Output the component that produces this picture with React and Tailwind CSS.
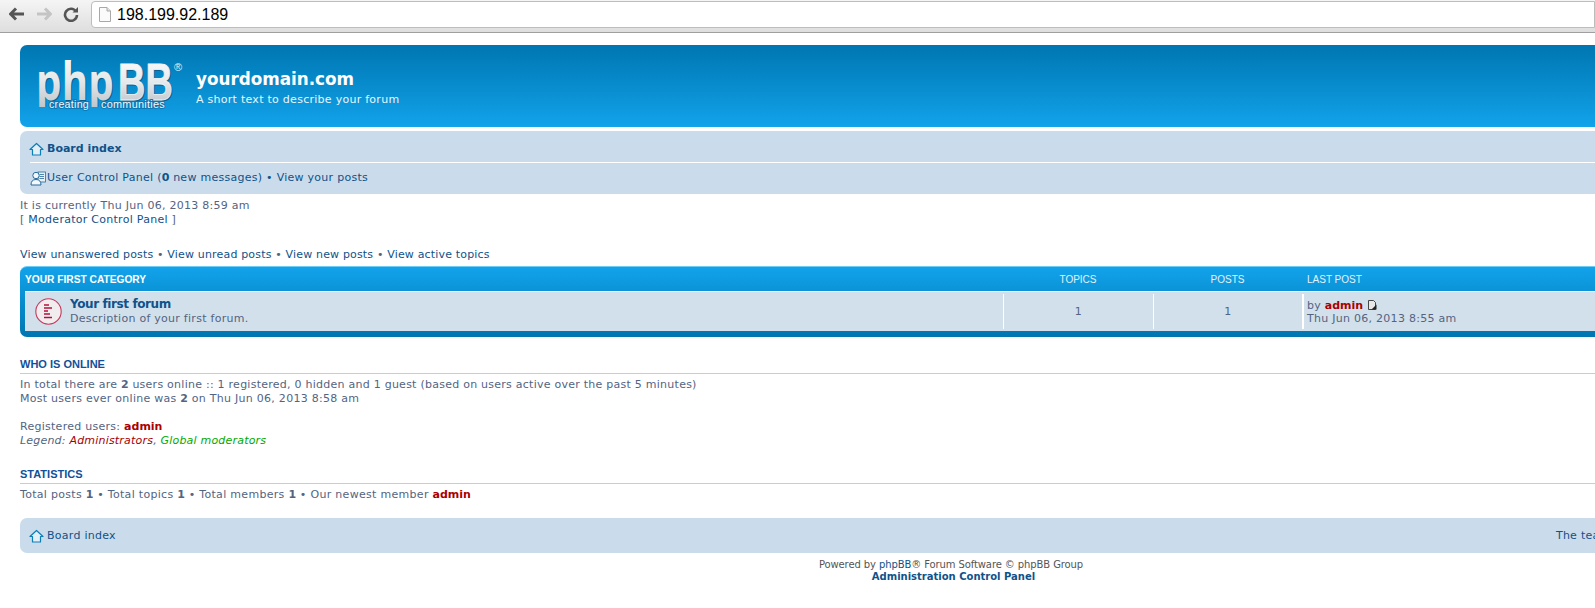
import React from "react";

const dejavu = "font-['DejaVu_Sans',Verdana,sans-serif]";

function HomeIcon() {
  return (
    <svg width="15" height="15" viewBox="0 0 15 15" className="shrink-0 -ml-[1px] mr-[1px]">
      <path d="M7.5 1.5 L14 7.5 L11.5 7.5 L11.5 13 L3.5 13 L3.5 7.5 L1 7.5 Z" fill="#e4eef5" stroke="#0a7fb8" strokeWidth="1.2" strokeLinejoin="round" />
    </svg>
  );
}

function UserIcon() {
  return (
    <svg width="16" height="16" viewBox="0 0 16 16" className="shrink-0">
      <rect x="8" y="2" width="7.5" height="10" fill="#e8f0f6" stroke="#256b9c" strokeWidth="0.8" />
      <path d="M9.5 4.5h4.5M9.5 6.5h4.5M9.5 8.5h4.5" stroke="#256b9c" strokeWidth="0.8" />
      <circle cx="6" cy="5.5" r="3.2" fill="#f4f8fb" stroke="#256b9c" strokeWidth="1" />
      <path d="M1 15c0-3.5 1.5-5.5 5-5.5s5 2 5 5.5z" fill="#f4f8fb" stroke="#256b9c" strokeWidth="1" />
    </svg>
  );
}

function ForumIcon() {
  return (
    <svg width="27" height="27" viewBox="0 0 27 27" className="shrink-0">
      <circle cx="13.5" cy="13.5" r="12.7" fill="#f1edee" stroke="#c8385c" strokeWidth="1.1" />
      <path d="M9 7h5M9 10h8M9 13h4M9 16h6M9 19.5h8" stroke="#b5103c" strokeWidth="1.4" />
    </svg>
  );
}

function LatestIcon() {
  return (
    <svg width="9" height="10" viewBox="0 0 9 10" className="inline-block align-[-1px] ml-[5px]">
      <path d="M0.5 0.5h5l2 2v7h-7z" fill="#e8e8e8" stroke="#333" strokeWidth="0.9" />
      <path d="M3.5 9.5l5-5v5z" fill="#222" />
    </svg>
  );
}

function PhpbbLogo() {
  const php = { fontFamily: "'Open Sans',sans-serif", fontSize: 52, fontWeight: 700, textLength: 78, lengthAdjust: "spacingAndGlyphs" };
  const bb = { fontFamily: "'Liberation Sans',sans-serif", fontSize: 52, fontWeight: 700, textLength: 55, lengthAdjust: "spacingAndGlyphs" };
  const small = { fontFamily: "'Liberation Sans',sans-serif", fontSize: 10.5, fill: "#f3f7fa", stroke: "#0b78b4", strokeWidth: 2, paintOrder: "stroke", lengthAdjust: "spacingAndGlyphs" };
  return (
    <svg width="150" height="60" viewBox="0 0 150 60" className="shrink-0">
      <defs>
        <linearGradient id="logoFill" x1="0" y1="0" x2="0" y2="1">
          <stop offset="0" stopColor="#ffffff" />
          <stop offset="0.5" stopColor="#e6e9eb" />
          <stop offset="1" stopColor="#b4bcc3" />
        </linearGradient>
        <clipPath id="logoClip">
          <rect x="0" y="0" width="150" height="47" />
        </clipPath>
      </defs>
      <g clipPath="url(#logoClip)">
        <text x="2" y="41" {...php} fill="#05608f">php</text>
        <text x="1" y="40" {...php} fill="url(#logoFill)">php</text>
      </g>
      <text x="84" y="41" {...bb} fill="#05608f" stroke="#05608f" strokeWidth="0.8">BB</text>
      <text x="83" y="40" {...bb} fill="url(#logoFill)" stroke="#f2f4f5" strokeWidth="0.8">BB</text>
      <text x="139" y="11" fontFamily="'Liberation Sans',sans-serif" fontSize="11" fill="#e6eef3">®</text>
      <text x="14" y="48" {...small} textLength="40">creating</text>
      <text x="66" y="48" {...small} textLength="64">communities</text>
    </svg>
  );
}

function BrowserBar() {
  return (
    <div className="h-[33px] flex items-start bg-gradient-to-b from-[#f5f5f5] to-[#dedede] border-b border-[#9f9f9f]">
      <div className="w-[91px] h-[28px] flex items-center pl-[9px] gap-[11px] shrink-0">
        <svg width="16" height="14" viewBox="0 0 16 14">
          <path d="M7 1.5 L1.5 7 L7 12.5 M2 7 H15" fill="none" stroke="#555" strokeWidth="3" />
        </svg>
        <svg width="16" height="14" viewBox="0 0 16 14">
          <path d="M9 1.5 L14.5 7 L9 12.5 M14 7 H1" fill="none" stroke="#c4c4c4" strokeWidth="3" />
        </svg>
        <svg width="16" height="16" viewBox="0 0 16 16">
          <path d="M13 5.5 A6 6 0 1 0 14 9" fill="none" stroke="#555" strokeWidth="2.6" />
          <path d="M9.5 6.5 H15 V1 Z" fill="#555" />
        </svg>
      </div>
      <div className="flex-1 h-[27px] mt-px bg-white border border-[#bdbdbd] rounded-l-[4px] flex items-center pl-[7px] gap-[6px] font-['Liberation_Sans',sans-serif] text-[16px] tracking-normal text-black">
        <svg width="12" height="15" viewBox="0 0 12 15" className="shrink-0">
          <path d="M0.5 0.5h7.5l3.5 3.5v10.5h-11z" fill="#fbfbfb" stroke="#a8a8a8" />
          <path d="M8 0.5v3.5h3.5" fill="#e4e4e4" stroke="#a8a8a8" />
        </svg>
        198.199.92.189
      </div>
    </div>
  );
}

function Sep() {
  return <span> • </span>;
}

function A({ children, className = "" }) {
  return <a className={`text-[#105289] ${className}`}>{children}</a>;
}

function Admin() {
  return <b className="text-[#aa0000]">admin</b>;
}

function SectionTitle({ children }) {
  return (
    <h3 className="font-['Liberation_Sans',sans-serif] font-bold text-[11px] leading-[14px] tracking-normal uppercase text-[#115098] border-b border-[#cccccc] pb-[2px] h-[17px]">
      {children}
    </h3>
  );
}

export default function App() {
  return (
    <div className={`w-[1595px] h-[608px] overflow-hidden bg-white ${dejavu} text-[11px] leading-[14px] tracking-[0.27px] [&_b]:tracking-normal text-[#536482]`}>
      <BrowserBar />
      <div className="w-[1862px] ml-[20px] pt-[12px]">
        <div className="h-[82px] rounded-[7px] bg-gradient-to-b from-[#0076b1] to-[#12a3eb] flex items-start pl-[15px] pt-[15px] text-white">
          <PhpbbLogo />
          <div className="ml-[11px] pt-[8px]">
            <div className="text-[16.8px] leading-[22px] font-bold tracking-normal">yourdomain.com</div>
            <div className="text-[11px] leading-[13px] mt-[3px] text-[#eaf5fb]">A short text to describe your forum</div>
          </div>
        </div>

        <div className="mt-[4px] h-[63px] rounded-[7px] bg-[#cadceb] px-[10px] text-[#105289]">
          <div className="h-[32px] flex items-center gap-[2px] border-b border-white pt-[5px] font-bold tracking-normal">
            <HomeIcon />
            <span>Board index</span>
          </div>
          <div className="h-[30px] flex items-center">
            <UserIcon />
            <span className="ml-px">
              User Control Panel (<b>0</b> new messages) <span>•</span> View your posts
            </span>
          </div>
        </div>

        <p className="mt-[5px]">It is currently Thu Jun 06, 2013 8:59 am</p>
        <p>
          [ <A>Moderator Control Panel</A> ]
        </p>

        <p className="mt-[21px] tracking-[0.17px]">
          <A>View unanswered posts</A>
          <Sep />
          <A>View unread posts</A>
          <Sep />
          <A>View new posts</A>
          <Sep />
          <A>View active topics</A>
        </p>

        <div className="mt-[4px] h-[71px] rounded-[7px] bg-gradient-to-b from-[#12a3eb] to-[#0076b1] border-t border-[#6fcdf5] px-[5px] pb-[6px]">
          <div className="h-[24px] pt-[2px] flex items-center font-['Liberation_Sans',sans-serif] uppercase text-[10px] tracking-normal">
            <div className="w-[978px] font-bold text-[10.2px] text-white">Your first category</div>
            <div className="w-[150px] text-center text-[#e3f2fb]">Topics</div>
            <div className="w-[149px] text-center text-[#e3f2fb]">Posts</div>
            <div className="pl-[5px] text-[#e3f2fb]">Last post</div>
          </div>
          <div className="h-[40px] bg-[#d2e0eb] border-t border-white flex py-[2px]">
            <div className="w-[978px] flex items-center pl-[10px] gap-[8px]">
              <ForumIcon />
              <div>
                <div className="text-[12px] leading-[15px] font-bold text-[#105289] tracking-[-0.4px]">Your first forum</div>
                <div className="leading-[14px]">Description of your first forum.</div>
              </div>
            </div>
            <div className="w-[150px] border-l border-white flex items-center justify-center">1</div>
            <div className="w-[149px] border-l border-white flex items-center justify-center">1</div>
            <div className="border-l-2 border-white pl-[3px] pt-[5px] leading-[13px]">
              by <Admin />
              <LatestIcon />
              <br />
              Thu Jun 06, 2013 8:55 am
            </div>
          </div>
        </div>

        <div className="mt-[20px]">
          <SectionTitle>Who is online</SectionTitle>
          <p className="mt-[4px] tracking-[0.25px]">
            In total there are <b>2</b> users online :: 1 registered, 0 hidden and 1 guest (based on users active over the past 5 minutes)
          </p>
          <p>
            Most users ever online was <b>2</b> on Thu Jun 06, 2013 8:58 am
          </p>
          <p className="mt-[14px]">
            Registered users: <Admin />
          </p>
          <p className="italic tracking-[0.2px]">
            Legend: <span className="text-[#aa0000]">Administrators</span>, <span className="text-[#00aa00]">Global moderators</span>
          </p>
        </div>

        <div className="mt-[19px]">
          <SectionTitle>Statistics</SectionTitle>
          <p className="mt-[4px] tracking-[0.3px]">
            Total posts <b>1</b>
            <Sep />
            Total topics <b>1</b>
            <Sep />
            Total members <b>1</b>
            <Sep />
            Our newest member <Admin />
          </p>
        </div>

        <div className="mt-[16px] h-[35px] rounded-[7px] bg-[#cadceb] pl-[10px] pt-[1px] flex items-center text-[#105289]">
          <HomeIcon />
          <span className="ml-[2px]">Board index</span>
          <span className="ml-[1440px] whitespace-nowrap">The team • Delete all board cookies • All times are UTC</span>
        </div>

        <div className="mt-[6px] text-center text-[10px] leading-[12px] tracking-[-0.1px] text-[#555555]">
          Powered by <A>phpBB</A>® Forum Software © phpBB Group
          <br />
          <A className="font-bold tracking-normal ml-[5px]">Administration Control Panel</A>
        </div>
      </div>
    </div>
  );
}
